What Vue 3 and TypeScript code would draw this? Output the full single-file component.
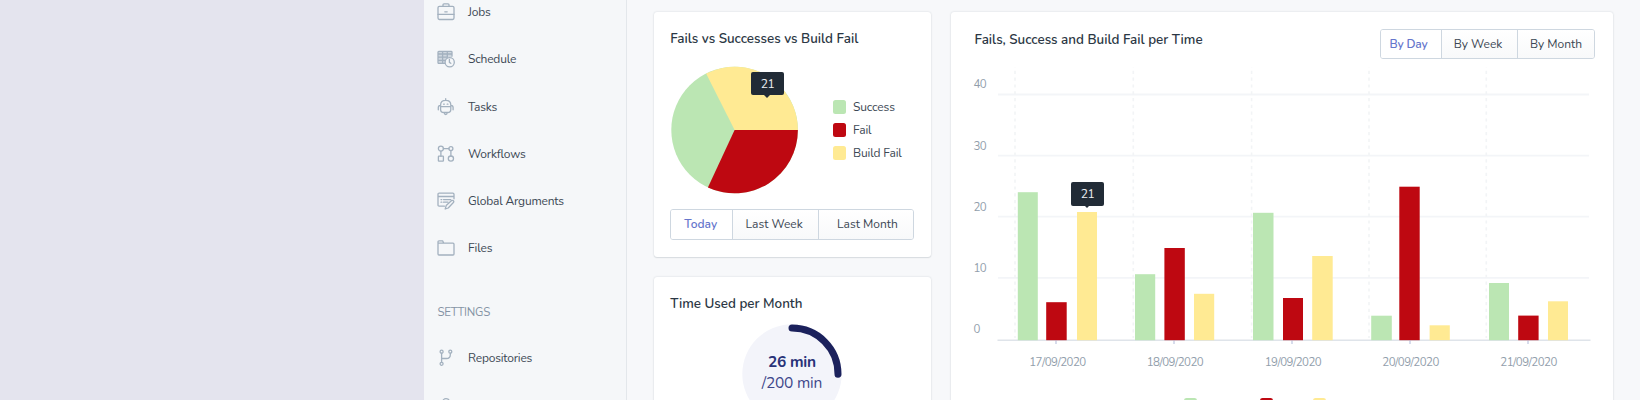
<script setup lang="ts">
interface NavItem { label: string; icon: string }
interface Bar { x: number; w: number; top: number; kind: string }
interface Day { date: string; guide: number; tick: number; mid: number; bars: Bar[] }

const nav: NavItem[] = [
  { label: 'Jobs', icon: 'jobs' },
  { label: 'Schedule', icon: 'schedule' },
  { label: 'Tasks', icon: 'tasks' },
  { label: 'Workflows', icon: 'workflows' },
  { label: 'Global Arguments', icon: 'arguments' },
  { label: 'Files', icon: 'files' },
]
const settings: NavItem[] = [
  { label: 'Repositories', icon: 'repositories' },
  { label: 'Users', icon: 'users' },
]
const legend = [
  { label: 'Success', kind: 'success' },
  { label: 'Fail', kind: 'fail' },
  { label: 'Build Fail', kind: 'build' },
]
const levels = [
  { value: 40, line: 82.5, base: 76 },
  { value: 30, line: 143.7, base: 138 },
  { value: 20, line: 204.6, base: 199 },
  { value: 10, line: 265.8, base: 260 },
]
const bars = (g: number[], r: number[], y: number[]): Bar[] => [
  { x: g[0], w: g[1], top: g[2], kind: 'success' },
  { x: r[0], w: r[1], top: r[2], kind: 'fail' },
  { x: y[0], w: y[1], top: y[2], kind: 'build' },
]
const days: Day[] = [
  { date: '17/09/2020', guide: 64, tick: 105, mid: 106.7, bars: bars([66.8, 20, 180.2], [95.2, 20.5, 290.2], [126, 20, 200]) },
  { date: '18/09/2020', guide: 182.3, tick: 223, mid: 224.2, bars: bars([184, 20.2, 262.2], [213.4, 20.4, 236], [243, 20.2, 281.8]) },
  { date: '19/09/2020', guide: 300.6, tick: 341, mid: 342.2, bars: bars([302, 20.5, 200.8], [332, 20, 286], [361.2, 20.5, 244]) },
  { date: '20/09/2020', guide: 418, tick: 459, mid: 459.8, bars: bars([420.2, 20.6, 303.7], [448.3, 20.4, 174.7], [478.6, 20.2, 313.3]) },
  { date: '21/09/2020', guide: 535.3, tick: 577, mid: 577.8, bars: bars([538, 20, 271], [567.2, 20.4, 303.6], [597, 20, 289.3]) },
]
</script>

<template>
  <div class="page">
    <aside class="sidebar">
      <template v-for="(group, gi) in [nav, settings]" :key="gi">
        <h3 v-if="gi === 1" class="heading">SETTINGS</h3>
        <nav class="nav">
          <a v-for="item in group" :key="item.label" class="item">
            <svg class="icon" viewBox="0 0 18 18">
              <g v-if="item.icon === 'jobs'">
                <rect x="1" y="3.3" width="16" height="13.2" rx="1.4" />
                <path d="M6 3V1.8q0-1 1-1h4q1 0 1 1V3M1 11.4h16M7.8 8.8h2.4" />
              </g>
              <g v-else-if="item.icon === 'schedule'">
                <path class="tint" d="M1.2 1.4h13.6v7L9 13.4H1.2z" />
                <path d="M8.2 13.4H1.8q-.8 0-.8-.8V2.2q0-.8.8-.8h12.4q.8 0 .8.8v4M1 4h14M1 7.2h9M1 10.3h7M5.6 1.4v12M10.3 1.4v6" />
                <circle class="base" cx="12.7" cy="12.2" r="4.6" />
                <path d="M12.4 9.4v3l1.4.9" />
              </g>
              <g v-else-if="item.icon === 'tasks'">
                <path d="M3.6 8.6V7q0-4.6 5.1-4.6T13.8 7v1.6M3.6 8.6h10.2v2.8q0 3.1-3.2 3.1H6.8q-3.2 0-3.2-3.1zM8.7.7v1.7M3.4 7.4Q1.3 7.6 1.3 9.5v2.3M14 7.4q2.1.2 2.1 2.1v2.3M7.2 14.7q.2 1.8 1.5 1.8t1.5-1.8M6.6 6.2h.7M10.2 6.2h.7" />
              </g>
              <g v-else-if="item.icon === 'workflows'">
                <circle cx="3.9" cy="3.6" r="2.5" />
                <circle cx="13.9" cy="3.6" r="2" />
                <rect x="1.4" y="11.2" width="5" height="5" rx=".5" />
                <circle cx="13.9" cy="13.6" r="2.6" />
                <path d="M6.4 3.6h5.5M3.9 6.1v5.1M13.9 5.6V11" />
              </g>
              <g v-else-if="item.icon === 'arguments'">
                <path d="M7.4 14.2H2.2q-1.2 0-1.2-1.2V2.3q0-1.2 1.2-1.2h13.6q1.2 0 1.2 1.2v4.5M1 4.5h16M4 7.6h.8M6.5 7.6h7.3M4 10.2h.8M6.5 10.2h4.5" />
                <path class="base" d="M9.2 13.6l5.4-5q1-.6 1.8.1.8.9 0 1.8L11.2 16l-3 1z" />
              </g>
              <g v-else-if="item.icon === 'files'">
                <path d="M1 15V2.8q0-1 1-1h3.6l1.2 2.4h9.2q1 0 1 1V15q0 1-1 1H2q-1 0-1-1zM1 4.2h6" />
              </g>
              <g v-else-if="item.icon === 'repositories'">
                <circle cx="4.6" cy="2.7" r="1.5" />
                <circle cx="13.3" cy="2.7" r="1.5" />
                <circle cx="4.6" cy="14.8" r="1.5" />
                <path d="M4.6 4.2v9.1M13.3 4.2v1.5q0 3.8-3.8 3.8H4.6" />
              </g>
              <g v-else>
                <circle cx="9" cy="6" r="3.4" />
                <path d="M2 17q0-6 7-6t7 6" />
              </g>
            </svg>
            <span>{{ item.label }}</span>
          </a>
        </nav>
      </template>
    </aside>

    <main class="main">
      <div class="column">
        <section class="card share">
          <h2 class="title">Fails vs Successes vs Build Fail</h2>
          <div class="share-body">
            <div class="pie-box">
              <svg class="pie" viewBox="-64.6 -64 128 128">
                <circle class="success" r="63.3" />
                <path class="fail" d="M0 0H63.3A63.3 63.3 0 0 1 -26.7 57.4Z" />
                <path class="build" d="M0 0H63.3A63.3 63.3 0 0 0 -28.5 -56.5Z" />
              </svg>
              <div class="tip on-pie">21</div>
            </div>
            <ul class="legend">
              <li v-for="l in legend" :key="l.label"><i :class="['swatch', l.kind]"></i>{{ l.label }}</li>
            </ul>
          </div>
          <div class="segments range">
            <button class="active">Today</button><button>Last Week</button><button>Last Month</button>
          </div>
        </section>
        <section class="card usage">
          <h2 class="title">Time Used per Month</h2>
          <svg class="gauge" viewBox="0 0 100 100">
            <circle class="disc" cx="50" cy="50" r="49.7" />
            <path class="arc" d="M50 4.1A46 46 0 0 1 96 50.3" />
            <text class="used" x="50" y="43.2" textLength="48">26 min</text>
            <text class="total" x="50" y="63.8" textLength="60.5">/200 min</text>
          </svg>
        </section>
      </div>

      <section class="card timeline">
        <header class="top">
          <h2 class="title">Fails, Success and Build Fail per Time</h2>
          <div class="segments period">
            <button class="active">By Day</button><button>By Week</button><button>By Month</button>
          </div>
        </header>
        <div class="plot-box">
          <svg class="plot" viewBox="0 55 662 280">
            <g v-for="l in levels" :key="l.value">
              <path class="grid" :d="`M47 ${l.line}H638`" />
              <text class="axis-label" x="22.6" :y="l.base" textLength="13">{{ l.value }}</text>
            </g>
            <text class="axis-label" x="22.6" y="321.2">0</text>
            <path v-for="d in days" :key="d.date" class="guide" :d="`M${d.guide} 55V326`" />
            <path class="axis" d="M46.5 328.2H639.5" />
            <g v-for="d in days" :key="d.date">
              <path class="tick" :d="`M${d.tick} 328V332`" />
              <rect v-for="b in d.bars" :key="b.kind" :class="b.kind" :x="b.x" :y="b.top" :width="b.w" :height="328.2 - b.top" />
            </g>
          </svg>
          <div class="tip on-bar">21</div>
        </div>
        <svg class="dates" viewBox="0 335 662 30">
          <text v-for="d in days" :key="d.date" class="date" :x="d.mid" y="353.8" textLength="57">{{ d.date }}</text>
        </svg>
        <div class="keys">
          <i v-for="l in legend" :key="l.kind" :class="['swatch', l.kind]"></i>
        </div>
      </section>
    </main>
  </div>
</template>

<style>
body { margin: 0; overflow: hidden; }
</style>

<style scoped>
* { box-sizing: border-box; }
.page { display: flex; height: 400px; overflow: hidden; padding-left: 424px; background: #e4e4ee; color: #3c4854; font-family: Nunito, "Open Sans", sans-serif; font-size: 12px; }
.sidebar { width: 203px; height: 470px; margin-top: -11.6px; flex: none; background: #f5f7f9; border-right: 1px solid #e3e7eb; }
.nav { display: flex; flex-direction: column; }
.item { display: flex; align-items: center; height: 47.25px; padding-left: 13px; gap: 13px; letter-spacing: -.2px; }
.icon { width: 18px; height: 18px; fill: none; stroke: #a3b1bf; stroke-width: 1.3; stroke-linecap: round; stroke-linejoin: round; }
.icon .tint { fill: #cfd7df; stroke: none; }
.icon .base { fill: #f5f7f9; }
.heading { height: 62px; margin: 0; padding: 28px 0 0 13.5px; font-size: 11.5px; line-height: 24px; font-weight: 400; color: #8594a5; letter-spacing: -.25px; }
.main { flex: 1; display: flex; align-items: flex-start; gap: 20px; padding: 12px 0 0 27px; background: #f7f8fa; }
.column { width: 277px; display: flex; flex-direction: column; gap: 20px; }
.card { background: #fff; border-radius: 3px; box-shadow: 0 0 2px rgba(50, 65, 80, .2), 0 1px 1px rgba(50, 65, 80, .1); }
.title { margin: 0; color: #2b3744; font-size: 13.4px; line-height: 20px; font-weight: 600; white-space: nowrap; }
.share { height: 244.5px; padding: 17px 17px 0 16.2px; }
.share-body { display: flex; justify-content: space-between; margin-top: 17px; height: 128px; }
.pie-box { position: relative; width: 128px; height: 128px; }
.pie { display: block; width: 128px; height: 128px; overflow: visible; }
.success { fill: #bbe6b3; background: #bbe6b3; }
.fail { fill: #be0811; background: #be0811; }
.build { fill: #ffea93; background: #ffea93; }
.legend { list-style: none; margin: 29.5px 0 0; padding: 0; width: 81px; }
.legend li { display: flex; align-items: center; gap: 6.7px; height: 23px; white-space: nowrap; letter-spacing: -.15px; }
.swatch { width: 13.3px; height: 13.7px; border-radius: 2.5px; flex: none; }
.tip { position: absolute; width: 33px; height: 23.5px; border-radius: 2px; background: #212b36; color: #eef1f4; text-align: center; line-height: 24px; font-size: 12px; letter-spacing: -.4px; }
.tip::after { content: ''; position: absolute; left: 13px; top: 23px; border: 3.5px solid transparent; border-top-color: #212b36; border-bottom: 0; }
.on-pie { left: 80.8px; top: 5.5px; }
.on-bar { left: 120px; top: 115px; }
.segments { display: flex; height: 30.5px; border: 1px solid #ced7e0; border-radius: 3px; background: #fff; overflow: hidden; }
.segments button { border: 0; border-left: 1px solid #ced7e0; padding: 0; background: linear-gradient(#fff, #f8f9fa); color: #3c4854; font: inherit; white-space: nowrap; letter-spacing: 0; }
.segments .active { border-left: 0; background: #fff; color: #6676cc; font-weight: 600; }
.range { width: 243.5px; margin-top: 15px; }
.range button:nth-child(1) { width: 61px; padding-right: 2px; }
.range button:nth-child(2) { width: 86px; padding-right: 3px; }
.range button:nth-child(3) { flex: 1; padding-left: 3px; }
.usage { height: 180px; padding: 17px 17px 0 16.2px; display: flex; flex-direction: column; }
.gauge { align-self: center; width: 100px; height: 100px; margin: 10.5px 1px 0 0; }
.disc { fill: #f3f4fa; }
.arc { fill: none; stroke: #1b215c; stroke-width: 7; stroke-linecap: round; }
.gauge text { text-anchor: middle; font-size: 15.5px; fill: #3e478a; }
.gauge .used { font-weight: 700; font-size: 15.5px; fill: #283278; }
.timeline { width: 662px; height: 430px; }
.top { display: flex; justify-content: space-between; padding: 16.5px 18px 0 23.5px; height: 55px; }
.top .title { margin-top: 1px; }
.period { width: 215px; }
.period button:nth-child(1) { width: 60px; padding-right: 5px; letter-spacing: -.2px; }
.period button:nth-child(2) { width: 76px; padding-right: 3px; }
.period button:nth-child(3) { flex: 1; }
.plot-box { position: relative; height: 280px; }
.plot { display: block; width: 662px; height: 280px; }
.grid { stroke: #f3f5f8; stroke-width: 1.8; }
.guide { stroke: #f2f4f6; stroke-width: 1.6; stroke-dasharray: 3.2 3.6; stroke-dashoffset: 3; }
.axis { stroke: #dfe4ea; stroke-width: 1.6; }
.tick { stroke: #d3d9ea; stroke-width: 1.8; }
.axis-label, .date { font-size: 11.5px; fill: #919eab; }
.date { text-anchor: middle; }
.dates { display: block; width: 662px; height: 30px; }
.keys { display: grid; grid-template-columns: 76.5px 52.5px auto; padding: 21.3px 0 0 232.5px; }
</style>
